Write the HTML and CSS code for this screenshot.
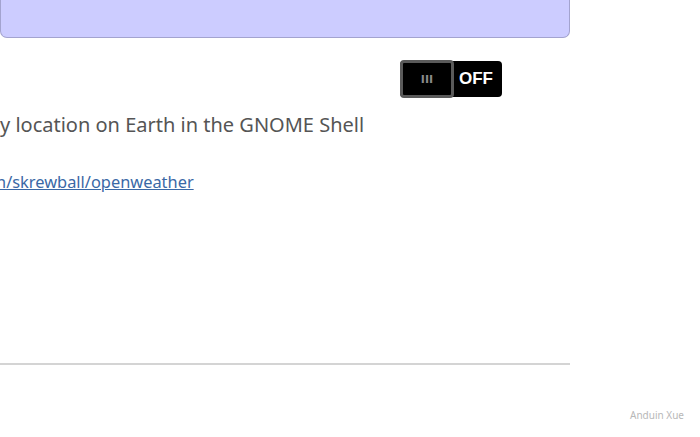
FILE: index.html
```html
<!DOCTYPE html>
<html>
<head>
<meta charset="utf-8">
<link rel="stylesheet" href="styles.css">
</head>
<body>
<div class="page">
  <main class="main">
    <div class="banner"></div>
    <div class="toggle-row">
      <div class="switch">
        <span class="knob">III</span>
        <span class="state">OFF</span>
      </div>
    </div>
    <p class="desc">y location on Earth in the GNOME Shell</p>
    <p class="link-line"><a href="#">n/skrewball/openweather</a></p>
    <hr class="rule">
  </main>
  <footer class="footer">Anduin Xue</footer>
</div>
</body>
</html>
```
FILE: styles.css
```css
html, body {
  margin: 0;
  padding: 0;
  background: #ffffff;
  overflow: hidden;
}
.page {
  width: 700px;
  height: 437px;
  font-family: "Noto Sans", "Open Sans", sans-serif;
}
.main {
  width: 570px;
  display: flex;
  flex-direction: column;
}
.banner {
  height: 38px;
  box-sizing: border-box;
  background: #ccccff;
  border: 1px solid #a3a3cf;
  border-top: none;
  border-radius: 0 0 7px 7px;
}
.toggle-row {
  display: flex;
  justify-content: flex-end;
  padding-right: 68px;
  margin-top: 23px;
}
.switch {
  display: flex;
  align-items: center;
  width: 102px;
  height: 36px;
  background: #000;
  border-radius: 4px;
  box-sizing: border-box;
}
.knob {
  width: 54px;
  height: 38px;
  box-sizing: border-box;
  border: 3px solid #5a5a5a;
  border-radius: 4px;
  background: #000;
  color: #8a8a8a;
  font-family: "DejaVu Sans", sans-serif;
  font-size: 11px;
  font-weight: bold;
  display: flex;
  align-items: center;
  justify-content: center;
}
.state {
  color: #ffffff;
  font-family: "Liberation Sans", sans-serif;
  font-weight: bold;
  font-size: 17px;
  margin-left: 5px;
}
.desc {
  margin: 15px 0 0 0;
  font-size: 20px;
  color: #555555;
  line-height: 26px;
}
.link-line {
  margin: 33px 0 0 0;
  font-size: 16.4px;
  line-height: 22px;
  text-indent: -4px;
}
.link-line a {
  color: #3a68a6;
  text-decoration: underline;
}
.rule {
  margin: 170px 0 0 0;
  border: none;
  border-top: 2px solid #d4d4d4;
  height: 0;
}
.footer {
  display: flex;
  justify-content: flex-end;
  padding-right: 16px;
  margin-top: 43px;
  font-size: 10px;
  color: #b8b8b8;
}
```
